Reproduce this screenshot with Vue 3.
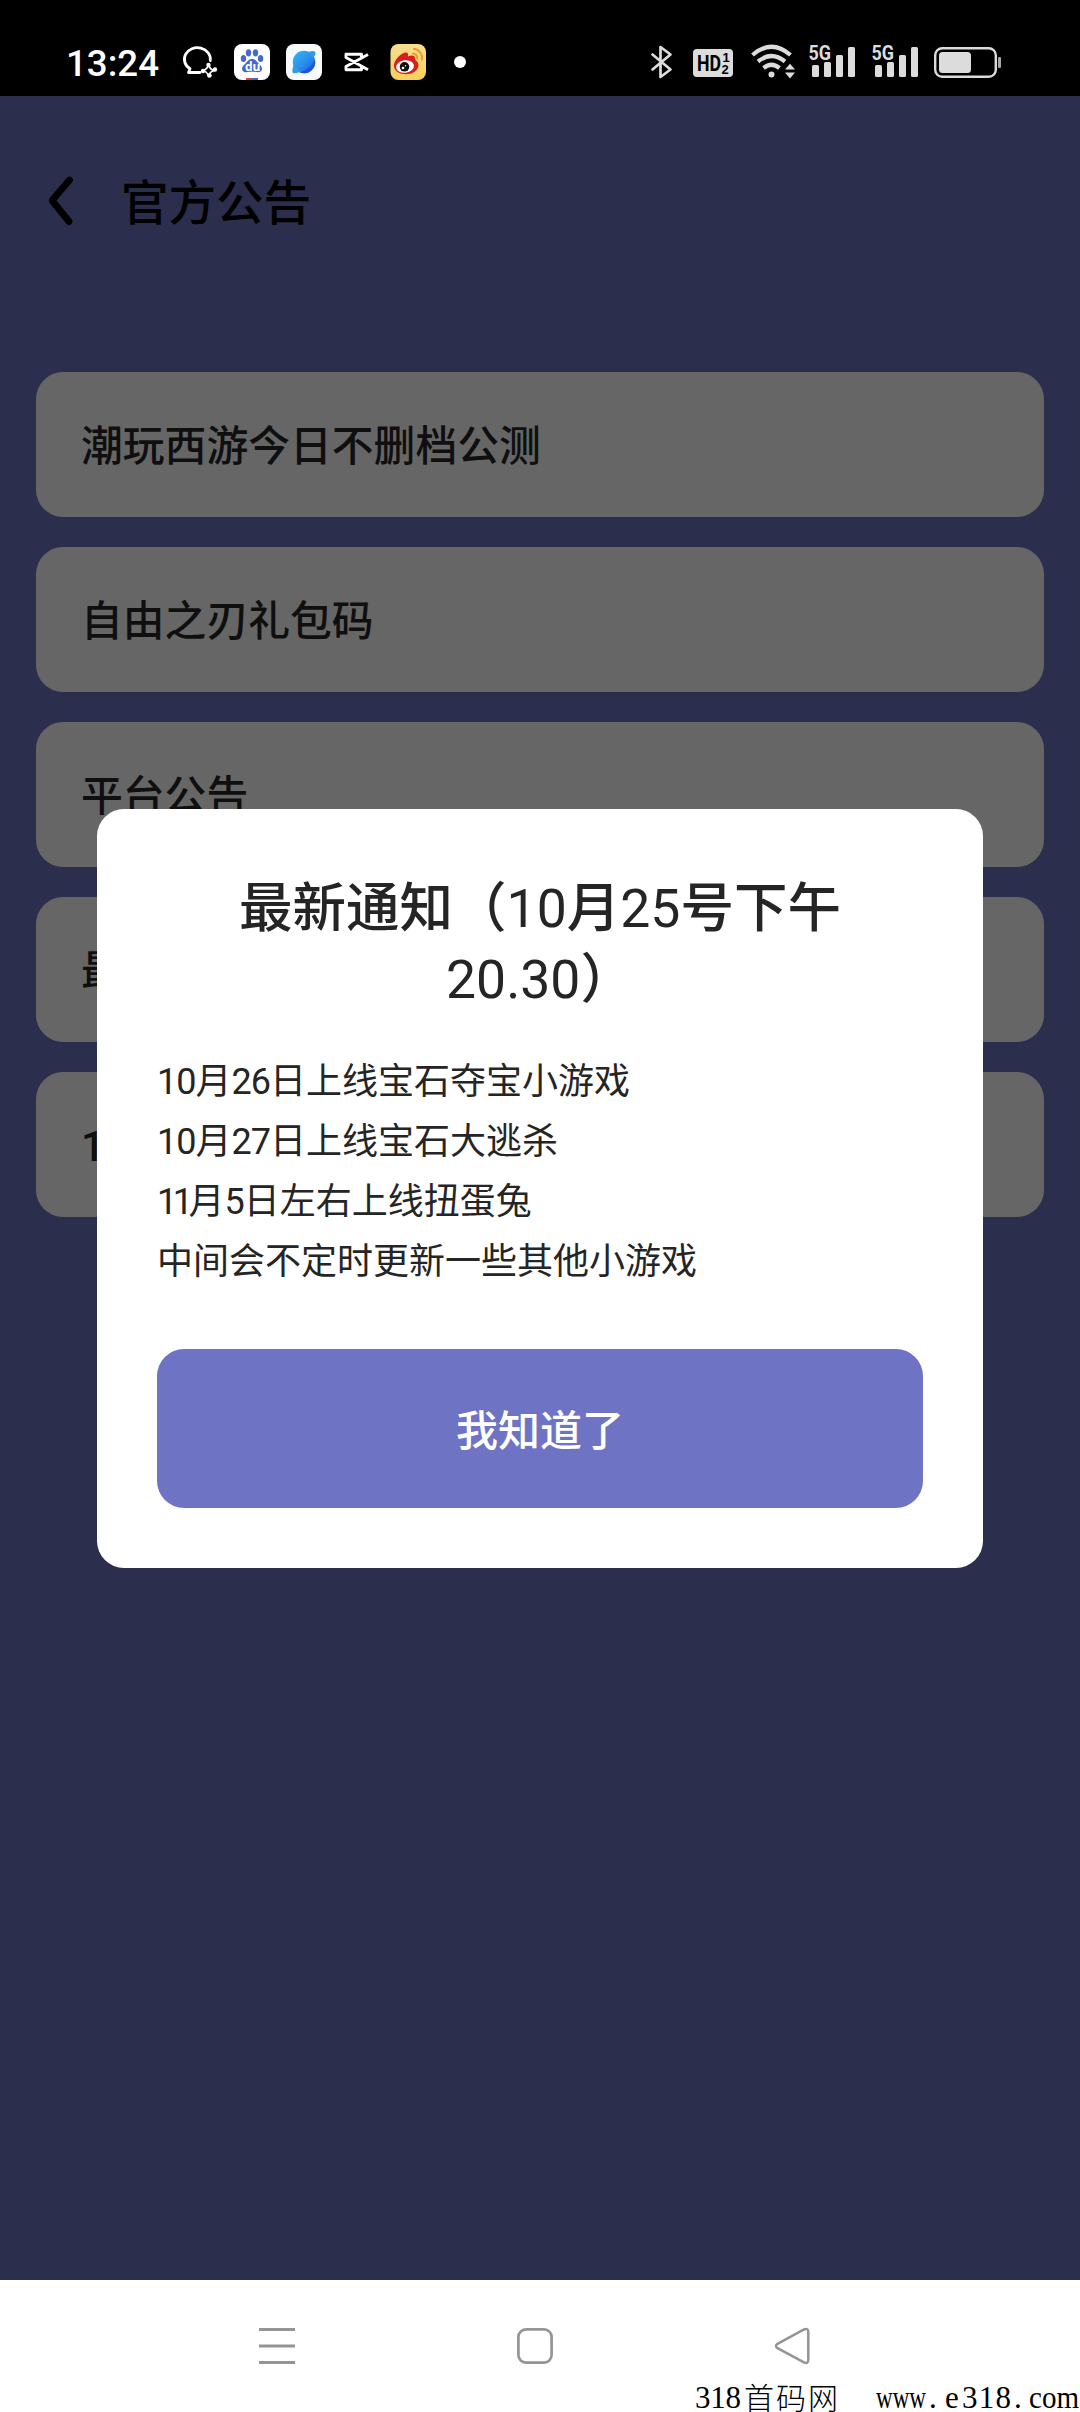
<script setup>
const notices = ['潮玩西游今日不删档公测', '自由之刃礼包码', '平台公告', '最', '1']
const lines = [
  [{ n: '10' }, { t: '月' }, { n: '26' }, { t: '日上线宝石夺宝小游戏' }],
  [{ n: '10' }, { t: '月' }, { n: '27' }, { t: '日上线宝石大逃杀' }],
  [{ n: '11', tight: true }, { t: '月' }, { n: '5' }, { t: '日左右上线扭蛋兔' }],
  [{ t: '中间会不定时更新一些其他小游戏' }],
]
const signals = [0, 1]
</script>

<template>
  <div class="screen">
    <header class="status">
      <div class="group">
        <svg width="96" height="40" viewBox="65 42 96 40"><text x="66" y="75.800" class="clock" textLength="93" lengthAdjust="spacingAndGlyphs">13:24</text></svg>
        <svg class="chat" width="36" height="40" viewBox="182 42 36 40" fill="none" stroke="#fff" stroke-width="2.800" stroke-linejoin="round" stroke-linecap="round">
          <path d="M200 72.500H188.500L190 68.800A13 11.600 0 1 1 210.300 60.500" />
          <path d="M209.500 64.500Q210.500 69.500 215.500 70.500Q210.500 71.500 209.500 76.500Q208.500 71.500 203.500 70.500Q208.500 69.500 209.500 64.500Z" stroke-width="1.500" transform="translate(-1 0)" />
          <g fill="#fff" stroke="none"><circle cx="208.500" cy="65" r="2.200" /><circle cx="215" cy="69.500" r="2.200" /><circle cx="209.500" cy="75.500" r="2.200" /><circle cx="203" cy="71" r="2.200" /></g>
        </svg>
        <svg class="baidu" width="36" height="40" viewBox="234 42 36 40">
          <rect x="234" y="44" width="36" height="36" rx="8" fill="#fff" />
          <g fill="#4468cf">
            <ellipse cx="243.500" cy="58.500" rx="2.700" ry="3.500" /><ellipse cx="248.500" cy="52.800" rx="2.700" ry="3.600" />
            <ellipse cx="255.500" cy="52.800" rx="2.700" ry="3.600" /><ellipse cx="260.600" cy="58.500" rx="2.700" ry="3.500" />
            <path d="M252 59C256 59 257 62.500 260 65C264.500 69 261 73 256.500 72C253 71.500 251 71.500 247.500 72C242.500 73 240 69 244 65C247 62.500 248 59 252 59Z" />
          </g>
          <text x="245" y="71" class="du">du</text>
          <path d="M246 78h6v2h-6z" fill="#d94054" /><path d="M252 78h6v2h-6z" fill="#4468cf" />
        </svg>
        <svg class="blue" width="36" height="40" viewBox="286 42 36 40">
          <defs><linearGradient id="sky" x1="0" y1="0" x2="1" y2="1"><stop offset="0" stop-color="#35b9f2" /><stop offset=".55" stop-color="#2a8cec" /><stop offset="1" stop-color="#1d55d8" /></linearGradient></defs>
          <rect x="286" y="44" width="36" height="36" rx="8" fill="#f7faff" />
          <circle cx="304" cy="62" r="11.200" fill="url(#sky)" />
          <path d="M309 51.500Q315 50 315.500 52.500Q316 54.500 313 58ZM293.500 65Q291.500 71.500 293 73Q294.500 74 300 72Z" fill="#2f9cea" />
          <path d="M315 60A11.200 11.200 0 0 1 300 72.500Q310 69 315 60Z" fill="#1f55dc" />
        </svg>
        <svg class="cut" width="26" height="40" viewBox="344 42 26 40" fill="none" stroke="#fff" stroke-width="2.900" stroke-linejoin="round">
          <path d="M368 54.500L346 66.500V69.700H361.500V66.500M361.500 57.500V54.300H346V57.500L368 69.800" />
        </svg>
        <svg class="weibo" width="36" height="40" viewBox="390 42 36 40">
          <defs><linearGradient id="sun" x1="0" y1="0" x2="0" y2="1"><stop offset="0" stop-color="#f8dd91" /><stop offset="1" stop-color="#fbcf58" /></linearGradient></defs>
          <rect x="390.500" y="44" width="35.500" height="36" rx="8" fill="url(#sun)" />
          <path d="M394 66C393.500 60 402 52 406.500 52.500C408.500 53 408 55.500 408 56.500C411 55 415.500 55 415 59C414.800 60.500 418.800 61.500 418.500 65.500C417.500 77 394.500 77 394 66Z" fill="#d61f20" />
          <ellipse cx="405" cy="66.500" rx="9" ry="6.300" fill="#fff" transform="rotate(-8 405 66.500)" />
          <circle cx="404.500" cy="66.800" r="4.800" fill="#111" /><circle cx="403" cy="68" r="1.300" fill="#fff" /><circle cx="405.500" cy="65.700" r=".7" fill="#fff" />
          <path d="M414 48.800A9.500 9.500 0 0 1 422 59.500M413 53.500A5 5 0 0 1 417.300 58.500" fill="none" stroke="#e89b2c" stroke-width="2" stroke-linecap="round" />
        </svg>
        <i class="dot"></i>
      </div>
      <div class="group right">
        <svg width="22" height="40" viewBox="651 42 22 40" fill="none" stroke="#dcdcdc" stroke-width="2.700" stroke-linejoin="round" stroke-linecap="round">
          <path d="M652.500 54.500L670.500 69.500L660.500 77V47L670.500 54.500L652.500 69.500" />
        </svg>
        <svg class="hd" width="40" height="40" viewBox="693 42 40 40">
          <rect x="693" y="49" width="40" height="28" rx="4" fill="#dcdcdc" />
          <text x="697" y="70.800" class="hd-t" textLength="24" lengthAdjust="spacingAndGlyphs">HD</text>
          <text x="722.500" y="61.500" class="hd-n">1</text><text x="721.500" y="73.500" class="hd-n">2</text>
        </svg>
        <svg class="wifi" width="45" height="40" viewBox="751 42 45 40">
          <g fill="none" stroke="#dcdcdc" stroke-width="4.200">
            <path d="M752.500 55Q771.500 38.500 790.500 55" /><path d="M758 61.500Q771.500 50.500 785 61.500" /><path d="M763.500 68Q771.500 61.500 779.500 68" />
          </g>
          <circle cx="771.500" cy="74.500" r="3" fill="#dcdcdc" />
          <path d="M785 69.500L790 63.800L795 69.500ZM785 72.500L790 78.500L795 72.500Z" fill="#dcdcdc" />
        </svg>
        <svg v-for="s in signals" :key="s" class="signal" width="48" height="40" viewBox="808 42 48 40" fill="#dcdcdc">
          <text x="808.500" y="60" class="five" textLength="22.500" lengthAdjust="spacingAndGlyphs">5G</text>
          <rect x="812" y="65" width="7" height="12" rx="1.500" /><rect x="824" y="62" width="7" height="15" rx="1.500" />
          <rect x="836" y="55" width="7" height="22" rx="1.500" /><rect x="848" y="47" width="7" height="30" rx="1.500" />
        </svg>
        <svg class="battery" width="68" height="40" viewBox="934 42 68 40">
          <rect x="935.200" y="48.200" width="60.600" height="28.600" rx="7" fill="none" stroke="#dcdcdc" stroke-width="2.400" />
          <rect x="939" y="52" width="32" height="21" rx="3.500" fill="#dcdcdc" /><rect x="998" y="57" width="3" height="11" rx="1.300" fill="#aaa" />
        </svg>
      </div>
    </header>

    <main class="page">
      <div class="head">
        <svg width="28" height="52" viewBox="0 0 28 52" fill="none" stroke="#000" stroke-width="6.800" stroke-linecap="round" stroke-linejoin="round"><path d="M23.500 5L6 25.500L23 46.500" /></svg>
        <h1>官方公告</h1>
      </div>
      <ul class="list">
        <li v-for="n in notices" :key="n">{{ n }}</li>
      </ul>
      <section class="modal">
        <h2>最新通知（<span class="thin">10</span>月<span class="thin">25</span>号下午<br /><span class="thin">20.30</span>）</h2>
        <div class="body">
          <p v-for="(line, i) in lines" :key="i"><span v-for="(s, j) in line" :key="j" :class="{ num: s.n, tight: s.tight }">{{ s.n || s.t }}</span></p>
        </div>
        <button>我知道了</button>
      </section>
    </main>

    <footer class="nav">
      <svg width="36" height="38" viewBox="0 0 36 38" stroke="#949494" stroke-width="3"><path d="M0 2.500H36M0 19H36M0 35.500H36" /></svg>
      <svg class="home" width="36" height="38" viewBox="0 0 36 38" fill="none" stroke="#949494" stroke-width="2.700"><rect x="1.400" y="2.400" width="33.200" height="33.200" rx="7.500" /></svg>
      <svg class="back" width="36" height="38" viewBox="0 0 36 38" fill="none" stroke="#949494" stroke-width="2.500"><path d="M2.500 16.800L29 2.500Q33.300 0.800 33.300 5V33Q33.300 37.200 29 35.300L2.500 21.200Q-0.500 19 2.500 16.800Z" /></svg>
      <svg class="mark" width="390" height="40" viewBox="690 2372 390 40">
        <text x="695" y="2408" textLength="46">318</text>
        <text x="744" y="2408.500" class="kai" textLength="94">首码网</text>
        <text x="876" y="2408" textLength="50" lengthAdjust="spacingAndGlyphs">www</text>
        <text x="929" y="2408">.</text><text x="945" y="2408">e</text>
        <text x="962" y="2408" textLength="49">318</text>
        <text x="1014" y="2408">.</text>
        <text x="1029" y="2408" textLength="50" lengthAdjust="spacingAndGlyphs">com</text>
      </svg>
    </footer>
  </div>
</template>

<style>
body { margin: 0; }
</style>

<style scoped>
.screen {
  width: 1080px;
  height: 2412px;
  display: flex;
  flex-direction: column;
  overflow: hidden;
  font-family: Roboto, "Noto Sans CJK SC", sans-serif;
}
svg { display: block; flex: none; overflow: visible; }
.status {
  height: 96px;
  padding: 0 78px 0 65px;
  box-sizing: border-box;
  background: #000;
  display: flex;
  justify-content: space-between;
  align-items: center;
  flex: none;
}
.group { display: flex; align-items: center; margin-top: 28px; }
.clock { font: 500 37px Roboto, sans-serif; fill: #fff; }
.chat { margin-left: 21px; }
.baidu, .blue { margin-left: 16px; }
.cut { margin-left: 22px; }
.weibo { margin-left: 20px; }
.dot { width: 12px; height: 12px; border-radius: 50%; background: #fff; margin-left: 28px; }
.du { font: 700 12px "Open Sans", sans-serif; fill: #fff; }
.hd { margin-left: 20px; }
.hd-t { font: 700 22px Roboto, sans-serif; fill: #000; }
.hd-n { font: 700 13px "Liberation Sans", sans-serif; fill: #000; }
.wifi { margin-left: 18px; }
.signal { margin-left: 12px; }
.signal + .signal { margin-left: 15px; }
.five { font: 700 21px Roboto, sans-serif; }
.battery { margin-left: 15px; }

.page { position: relative; height: 2184px; flex: none; background: #2c2e4e; }
.head { display: flex; align-items: center; height: 210px; padding-left: 46px; }
h1 { margin: 0 0 3px 47px; font-size: 47.500px; line-height: 60px; font-weight: 500; color: #000; font-family: "Noto Sans CJK SC", sans-serif; }
.list { list-style: none; margin: 66px 36px 0; padding: 0; display: flex; flex-direction: column; gap: 30px; }
.list li {
  height: 145px;
  line-height: 149px;
  box-sizing: border-box;
  padding-left: 45px;
  border-radius: 27px;
  background: #666;
  color: #0f0f0f;
  font-size: 41.800px;
  font-weight: 500;
}
.modal {
  position: absolute;
  left: 97px;
  top: 713px;
  width: 886px;
  height: 759px;
  box-sizing: border-box;
  padding: 64px 60px 0;
  border-radius: 27px;
  background: #fff;
  color: #252525;
}
h2 { margin: 0; text-align: center; font-size: 53.500px; line-height: 71px; font-weight: 500; }
.thin { font-weight: 400; }
.body { margin: 37px 0 57px; }
.body p { margin: 0; height: 60px; line-height: 60px; font-size: 36px; white-space: nowrap; }
.num { letter-spacing: -1px; }
.tight { letter-spacing: -4.500px; }
button {
  display: block;
  width: 100%;
  height: 159px;
  padding: 0 0 2px;
  border: 0;
  border-radius: 27px;
  background: #6e74c3;
  color: #fff;
  font: 500 42px "Noto Sans CJK SC", sans-serif;
}
.nav { height: 132px; flex: none; background: #fff; display: flex; position: relative; padding: 47px 0 0 259px; box-sizing: border-box; }
.home { margin-left: 222px; }
.back { margin-left: 222px; }
.mark { position: absolute; right: 0; bottom: 0; font: 31px "Liberation Serif", serif; }
.kai { font: 300 30px "Noto Sans CJK SC", sans-serif; }
</style>
